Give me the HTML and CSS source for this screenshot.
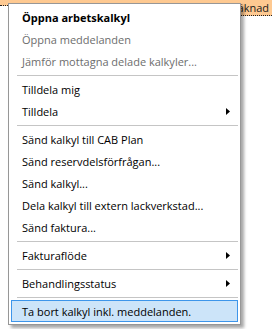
FILE: index.html
```html
<!DOCTYPE html>
<html lang="sv">
<head>
<meta charset="utf-8">
<title>Kontextmeny</title>
<link rel="stylesheet" href="styles.css">
</head>
<body>
<div class="grid-row">
  <div class="row-main"></div>
  <div class="row-cell"><span class="cell-text">Beräknad</span></div>
</div>

<div class="menu" role="menu">
  <div class="item bold">Öppna arbetskalkyl</div>
  <div class="item disabled">Öppna meddelanden</div>
  <div class="item disabled">Jämför mottagna delade kalkyler...</div>
  <div class="sep"></div>
  <div class="item">Tilldela mig</div>
  <div class="item sub"><span class="label">Tilldela</span><svg class="arrow" width="4" height="7" viewBox="0 0 4 7"><path d="M0 0 L4 3.5 L0 7 Z" fill="#000"/></svg></div>
  <div class="sep"></div>
  <div class="item">Sänd kalkyl till CAB Plan</div>
  <div class="item">Sänd reservdelsförfrågan...</div>
  <div class="item">Sänd kalkyl...</div>
  <div class="item">Dela kalkyl till extern lackverkstad...</div>
  <div class="item">Sänd faktura...</div>
  <div class="sep"></div>
  <div class="item sub"><span class="label">Fakturaflöde</span><svg class="arrow" width="4" height="7" viewBox="0 0 4 7"><path d="M0 0 L4 3.5 L0 7 Z" fill="#000"/></svg></div>
  <div class="sep"></div>
  <div class="item sub"><span class="label">Behandlingsstatus</span><svg class="arrow" width="4" height="7" viewBox="0 0 4 7"><path d="M0 0 L4 3.5 L0 7 Z" fill="#000"/></svg></div>
  <div class="sep"></div>
  <div class="item hot">Ta bort kalkyl inkl. meddelanden.</div>
</div>
</body>
</html>
```

FILE: styles.css
```css
html, body {
  margin: 0;
  padding: 0;
}
body {
  width: 272px;
  height: 329px;
  background: #ffffff;
  position: relative;
  overflow: hidden;
  font-family: "Open Sans", "Noto Sans", sans-serif;
  font-size: 11px;
  color: #000;
}

.grid-row {
  display: flex;
  align-items: flex-start;
}
.row-main {
  flex: 1;
  height: 5px;
  background: #fec991;
  border-bottom: 1px dotted #222;
}
.row-cell {
  width: 31px;
  height: 15px;
  background: #fec991;
  border-top: 1px dotted #222;
  border-bottom: 1px dotted #222;
  display: flex;
  justify-content: flex-end;
  align-items: center;
  white-space: nowrap;
  padding-right: 3px;
  margin-top: -1px;
  color: #1a1a1a;
}
.cell-text {
  flex: none;
}

.menu {
  position: absolute;
  left: 8px;
  top: 3px;
  width: 233px;
  box-sizing: border-box;
  background: #ffffff;
  border: 1px solid #979797;
  padding: 2px;
  box-shadow: 3px 3px 3px rgba(0, 0, 0, 0.35);
  display: flex;
  flex-direction: column;
}

.item {
  height: 22px;
  box-sizing: border-box;
  padding-left: 10px;
  display: flex;
  align-items: center;
  white-space: nowrap;
  border: 1px solid transparent;
}
.item.bold {
  font-weight: 700;
}
.item.disabled {
  color: #6d6d6d;
}
.item .label {
  flex: 1;
}
.item .arrow {
  margin-right: 7px;
  flex: none;
}
.item.hot {
  background: #cce4f9;
  border-color: #3d95ea;
}

.sep {
  height: 6px;
  display: flex;
  align-items: center;
  padding-left: 6px;
}
.sep::after {
  content: "";
  flex: 1;
  height: 1px;
  background: #c5c5c5;
}
```
